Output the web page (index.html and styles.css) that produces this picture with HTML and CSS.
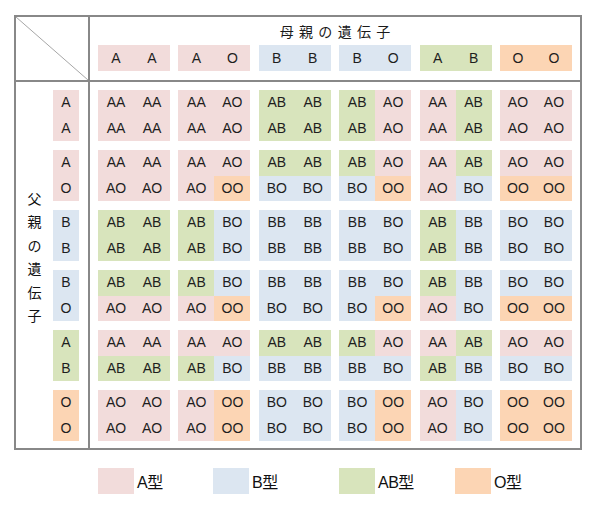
FILE: index.html
```html
<!DOCTYPE html>
<html lang="ja">
<head>
<meta charset="utf-8">
<title>血液型の遺伝</title>
<link rel="stylesheet" href="styles.css">
</head>
<body>
<div class="sheet">
  <div class="table">
    <div class="corner">
      <svg class="diag" viewBox="0 0 72 63" preserveAspectRatio="none"><line x1="0" y1="0" x2="72" y2="63" stroke="#a6a6a6" stroke-width="1"/></svg>
    </div>
    <div class="head">
      <div class="title">母親の遺伝子</div>
      <div class="mothers">
        <div class="pair a"><span>A</span><span>A</span></div>
        <div class="pair a"><span>A</span><span>O</span></div>
        <div class="pair b"><span>B</span><span>B</span></div>
        <div class="pair b"><span>B</span><span>O</span></div>
        <div class="pair ab"><span>A</span><span>B</span></div>
        <div class="pair o"><span>O</span><span>O</span></div>
      </div>
    </div>
    <div class="side">
      <div class="vlabel">父<br>親<br>の<br>遺<br>伝<br>子</div>
      <div class="fathers">
        <div class="fpair a"><span>A</span><span>A</span></div>
        <div class="fpair a"><span>A</span><span>O</span></div>
        <div class="fpair b"><span>B</span><span>B</span></div>
        <div class="fpair b"><span>B</span><span>O</span></div>
        <div class="fpair ab"><span>A</span><span>B</span></div>
        <div class="fpair o"><span>O</span><span>O</span></div>
      </div>
    </div>
    <div class="body">
      <div class="grid">
        <!-- father A A -->
        <div class="cell"><span class="a">AA</span><span class="a">AA</span><span class="a">AA</span><span class="a">AA</span></div>
        <div class="cell"><span class="a">AA</span><span class="a">AO</span><span class="a">AA</span><span class="a">AO</span></div>
        <div class="cell"><span class="ab">AB</span><span class="ab">AB</span><span class="ab">AB</span><span class="ab">AB</span></div>
        <div class="cell"><span class="ab">AB</span><span class="a">AO</span><span class="ab">AB</span><span class="a">AO</span></div>
        <div class="cell"><span class="a">AA</span><span class="ab">AB</span><span class="a">AA</span><span class="ab">AB</span></div>
        <div class="cell"><span class="a">AO</span><span class="a">AO</span><span class="a">AO</span><span class="a">AO</span></div>
        <!-- father A O -->
        <div class="cell"><span class="a">AA</span><span class="a">AA</span><span class="a">AO</span><span class="a">AO</span></div>
        <div class="cell"><span class="a">AA</span><span class="a">AO</span><span class="a">AO</span><span class="o">OO</span></div>
        <div class="cell"><span class="ab">AB</span><span class="ab">AB</span><span class="b">BO</span><span class="b">BO</span></div>
        <div class="cell"><span class="ab">AB</span><span class="a">AO</span><span class="b">BO</span><span class="o">OO</span></div>
        <div class="cell"><span class="a">AA</span><span class="ab">AB</span><span class="a">AO</span><span class="b">BO</span></div>
        <div class="cell"><span class="a">AO</span><span class="a">AO</span><span class="o">OO</span><span class="o">OO</span></div>
        <!-- father B B -->
        <div class="cell"><span class="ab">AB</span><span class="ab">AB</span><span class="ab">AB</span><span class="ab">AB</span></div>
        <div class="cell"><span class="ab">AB</span><span class="b">BO</span><span class="ab">AB</span><span class="b">BO</span></div>
        <div class="cell"><span class="b">BB</span><span class="b">BB</span><span class="b">BB</span><span class="b">BB</span></div>
        <div class="cell"><span class="b">BB</span><span class="b">BO</span><span class="b">BB</span><span class="b">BO</span></div>
        <div class="cell"><span class="ab">AB</span><span class="b">BB</span><span class="ab">AB</span><span class="b">BB</span></div>
        <div class="cell"><span class="b">BO</span><span class="b">BO</span><span class="b">BO</span><span class="b">BO</span></div>
        <!-- father B O -->
        <div class="cell"><span class="ab">AB</span><span class="ab">AB</span><span class="a">AO</span><span class="a">AO</span></div>
        <div class="cell"><span class="ab">AB</span><span class="b">BO</span><span class="a">AO</span><span class="o">OO</span></div>
        <div class="cell"><span class="b">BB</span><span class="b">BB</span><span class="b">BO</span><span class="b">BO</span></div>
        <div class="cell"><span class="b">BB</span><span class="b">BO</span><span class="b">BO</span><span class="o">OO</span></div>
        <div class="cell"><span class="ab">AB</span><span class="b">BB</span><span class="a">AO</span><span class="b">BO</span></div>
        <div class="cell"><span class="b">BO</span><span class="b">BO</span><span class="o">OO</span><span class="o">OO</span></div>
        <!-- father A B -->
        <div class="cell"><span class="a">AA</span><span class="a">AA</span><span class="ab">AB</span><span class="ab">AB</span></div>
        <div class="cell"><span class="a">AA</span><span class="a">AO</span><span class="ab">AB</span><span class="b">BO</span></div>
        <div class="cell"><span class="ab">AB</span><span class="ab">AB</span><span class="b">BB</span><span class="b">BB</span></div>
        <div class="cell"><span class="ab">AB</span><span class="a">AO</span><span class="b">BB</span><span class="b">BO</span></div>
        <div class="cell"><span class="a">AA</span><span class="ab">AB</span><span class="ab">AB</span><span class="b">BB</span></div>
        <div class="cell"><span class="a">AO</span><span class="a">AO</span><span class="b">BO</span><span class="b">BO</span></div>
        <!-- father O O -->
        <div class="cell"><span class="a">AO</span><span class="a">AO</span><span class="a">AO</span><span class="a">AO</span></div>
        <div class="cell"><span class="a">AO</span><span class="o">OO</span><span class="a">AO</span><span class="o">OO</span></div>
        <div class="cell"><span class="b">BO</span><span class="b">BO</span><span class="b">BO</span><span class="b">BO</span></div>
        <div class="cell"><span class="b">BO</span><span class="o">OO</span><span class="b">BO</span><span class="o">OO</span></div>
        <div class="cell"><span class="a">AO</span><span class="b">BO</span><span class="a">AO</span><span class="b">BO</span></div>
        <div class="cell"><span class="o">OO</span><span class="o">OO</span><span class="o">OO</span><span class="o">OO</span></div>
      </div>
    </div>
  </div>
  <div class="legend">
    <div class="item"><span class="swatch a"></span><span class="lbl">A型</span></div>
    <div class="item"><span class="swatch b"></span><span class="lbl">B型</span></div>
    <div class="item"><span class="swatch ab"></span><span class="lbl">AB型</span></div>
    <div class="item"><span class="swatch o"></span><span class="lbl">O型</span></div>
  </div>
</div>
</body>
</html>
```

FILE: styles.css
```css
html, body {
  margin: 0;
  padding: 0;
  background: #ffffff;
}

body {
  font-family: "Liberation Sans", Arial, "Noto Sans CJK JP", sans-serif;
  font-size: 14px;
  color: #1e1e1e;
}

.sheet {
  padding: 15px 0 0 14px;
}

.a { background: #f2dcdb; }
.b { background: #dce6f1; }
.ab { background: #d8e4bc; }
.o { background: #fcd5b4; }

.table {
  box-sizing: border-box;
  width: 568px;
  height: 435px;
  border: 2px solid #888888;
  display: grid;
  grid-template-columns: 74px 490px;
  grid-template-rows: 65px 366px;
}

.corner {
  border-right: 2px solid #888888;
  border-bottom: 2px solid #888888;
  position: relative;
}

.diag {
  display: block;
  width: 72px;
  height: 63px;
}

.head {
  border-bottom: 2px solid #888888;
  padding: 6px 0 0 8px;
}

.title {
  font-family: "Noto Sans CJK JP", sans-serif;
  font-size: 14px;
  line-height: 16px;
  letter-spacing: 5.3px;
  padding-left: 5.3px;
  text-align: center;
  margin-right: 8px;
  color: #1a1a1a;
}

.mothers {
  margin-top: 6px;
  display: grid;
  grid-template-columns: repeat(6, 72px);
  column-gap: 8.4px;
}

.pair {
  display: grid;
  grid-template-columns: 36px 36px;
  height: 26px;
  line-height: 26px;
  text-align: center;
}

.side {
  border-right: 2px solid #888888;
  display: flex;
  padding-top: 8px;
}

.vlabel {
  width: 37px;
  padding-top: 97px;
  font-family: "Noto Sans CJK JP", sans-serif;
  font-size: 14px;
  line-height: 23.4px;
  text-align: center;
  color: #111111;
}

.fathers {
  display: grid;
  grid-template-rows: repeat(6, 51px);
  row-gap: 9px;
  width: 26px;
}

.fpair {
  display: grid;
  grid-template-rows: 25.5px 25.5px;
  line-height: 25.5px;
  text-align: center;
}

.body {
  padding: 8px 0 0 8px;
}

.grid {
  display: grid;
  grid-template-columns: repeat(6, 72px);
  grid-template-rows: repeat(6, 51px);
  column-gap: 8.4px;
  row-gap: 9px;
}

.cell {
  display: grid;
  grid-template-columns: 36px 36px;
  grid-template-rows: 25.5px 25.5px;
}

.cell span {
  text-align: center;
  line-height: 25.5px;
}

.legend {
  margin-top: 18px;
  padding-left: 84px;
  display: grid;
  grid-template-columns: 115px 126px 116px auto;
}

.item {
  display: flex;
  align-items: center;
}

.swatch {
  width: 36px;
  height: 26px;
  margin-right: 3px;
}

.lbl {
  font-family: "Liberation Sans", Arial, "Noto Sans CJK JP", sans-serif;
  font-size: 16px;
  letter-spacing: -0.5px;
  color: #111111;
}
```
